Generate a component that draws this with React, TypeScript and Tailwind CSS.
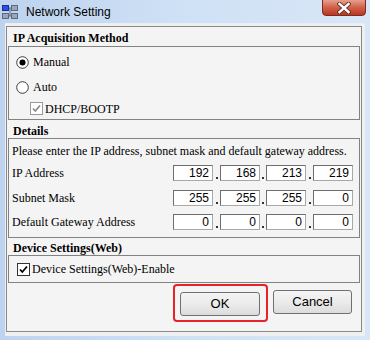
import React from "react";

const serif = { fontFamily: "'Liberation Serif', 'Times New Roman', serif" };
const sans = { fontFamily: "'Liberation Sans', Arial, sans-serif" };

function Radio({ checked }: { checked?: boolean }) {
  return (
    <svg width="13" height="13" viewBox="0 0 13 13" className="shrink-0">
      <circle cx="6.5" cy="6.5" r="5.8" fill="#ffffff" stroke="#3c3c3c" strokeWidth="1" />
      {checked && <circle cx="6.5" cy="6.5" r="3" fill="#000000" />}
    </svg>
  );
}

function Check({ disabled }: { disabled?: boolean }) {
  const c = disabled ? "#8c8c8c" : "#000000";
  const b = disabled ? "#9a9a9a" : "#333333";
  return (
    <svg width="13" height="13" viewBox="0 0 13 13" className="shrink-0">
      <rect x="0.5" y="0.5" width="12" height="12" fill="#ffffff" stroke={b} strokeWidth="1" />
      <path d="M3 6.5 L5.3 9 L10 3.5" fill="none" stroke={c} strokeWidth="1.8" />
    </svg>
  );
}

function IpBox({ v }: { v: string }) {
  return (
    <div
      className="w-[40px] h-[16px] bg-white border border-t-[#6e6e6e] border-l-[#6e6e6e] border-r-[#a8a8a8] border-b-[#a8a8a8] flex items-center justify-end pr-[3px] text-[12px] leading-none text-black"
      style={sans}
    >
      {v}
    </div>
  );
}

function Dot({ w }: { w: string }) {
  return (
    <div className={`${w} h-[16px] flex items-end justify-center pb-[2px]`}>
      <div className="w-[2px] h-[2px] bg-[#333]" />
    </div>
  );
}

function IpRow({ label, vals, h }: { label: string; vals: string[]; h: string }) {
  return (
    <div className={`${h} flex items-center`}>
      <div className="w-[164px] pl-[3px] text-[12px] text-black" style={serif}>
        {label}
      </div>
      <IpBox v={vals[0]} />
      <Dot w="w-[7px]" />
      <IpBox v={vals[1]} />
      <Dot w="w-[6px]" />
      <IpBox v={vals[2]} />
      <Dot w="w-[7px]" />
      <IpBox v={vals[3]} />
    </div>
  );
}

export default function App() {
  return (
    <div className="w-[370px] h-[340px] overflow-hidden relative bg-gradient-to-r from-[#bdd3ef] via-[#cfe1f5] to-[#d8e7f7]">
      {/* title bar */}
      <div className="h-[23px] flex items-center relative">
        <svg width="16" height="16" viewBox="0 0 16 16" className="ml-[2px] shrink-0">
          <rect x="0.5" y="1.5" width="6" height="5" fill="#2a4fe8" stroke="#1a2f9a" />
          <rect x="9.5" y="1.5" width="6" height="5" fill="#9aa6b8" stroke="#5d6a7e" />
          <rect x="0.5" y="9.5" width="6" height="5" fill="#9aa6b8" stroke="#5d6a7e" />
          <rect x="9.5" y="9.5" width="6" height="5" fill="#9aa6b8" stroke="#5d6a7e" />
          <path d="M7 4 H9 M8 4 V12 M7 12 H9" stroke="#5d6a7e" strokeWidth="1" fill="none" />
        </svg>
        <span className="ml-[8px] text-[12px] text-black" style={sans}>
          Network Setting
        </span>
        <div className="absolute left-[322px] top-[-2px] w-[44px] h-[18px] rounded-b-[4px] border border-[#7d2a1f] bg-gradient-to-b from-[#e7a897] via-[#d4634c] to-[#b9351f] flex items-center justify-center">
          <svg width="14" height="12" viewBox="0 0 14 12" className="mt-[1px]">
            <path d="M2.5 2 L11.5 10 M11.5 2 L2.5 10" stroke="#5a2a22" strokeWidth="4.2" strokeLinecap="square" />
            <path d="M2.5 2 L11.5 10 M11.5 2 L2.5 10" stroke="#ffffff" strokeWidth="2.4" strokeLinecap="square" />
          </svg>
        </div>
      </div>

      {/* client area */}
      <div className="mx-[5px] h-[313px] bg-[#f0f0f0] border-t border-[#e9eef5] pt-[2px]">
        <div className="ml-[1px] w-[356px] h-[306px] border border-[#8a8a8a] bg-[#f4f4f4] px-[1px] flex flex-col">
          {/* IP Acquisition Method */}
          <div className="h-[19px] flex items-end pb-[1px] pl-[5px] text-[12px] leading-[14px] font-bold text-black" style={serif}>
            IP Acquisition Method
          </div>
          <div className="w-[352px] h-[74px] border border-[#828282] flex flex-col pt-[2px]">
            <div className="h-[26px] flex items-center pl-[7px] gap-[4px] text-[12px] text-black" style={serif}>
              <Radio checked />
              <span>Manual</span>
            </div>
            <div className="h-[24px] flex items-center pl-[7px] gap-[4px] text-[12px] text-black" style={serif}>
              <Radio />
              <span>Auto</span>
            </div>
            <div className="h-[19px] flex items-center pl-[21px] gap-[2px] text-[12px] text-black" style={serif}>
              <Check disabled />
              <span>DHCP/BOOTP</span>
            </div>
          </div>

          {/* Details */}
          <div className="h-[18px] flex items-end pb-[0px] pl-[5px] text-[12px] leading-[13px] font-bold text-black" style={serif}>
            Details
          </div>
          <div className="w-[352px] h-[100px] border border-[#828282] flex flex-col pt-[2px]">
            <div className="h-[20px] flex items-center pl-[3px] text-[12px] text-black whitespace-nowrap" style={serif}>
              Please enter the IP address, subnet mask and default gateway address.
            </div>
            <IpRow h="h-[24px]" label="IP Address" vals={["192", "168", "213", "219"]} />
            <IpRow h="h-[25px]" label="Subnet Mask" vals={["255", "255", "255", "0"]} />
            <IpRow h="h-[24px]" label="Default Gateway Address" vals={["0", "0", "0", "0"]} />
          </div>

          {/* Device Settings */}
          <div className="h-[17px] flex items-end pb-[0px] pl-[5px] text-[12px] leading-[13px] font-bold text-black" style={serif}>
            Device Settings(Web)
          </div>
          <div className="w-[352px] h-[28px] border border-[#828282] flex items-center pl-[8px] gap-[2px] text-[12px] text-black" style={serif}>
            <Check />
            <span>Device Settings(Web)-Enable</span>
          </div>

          {/* Buttons */}
          <div className="flex justify-end pr-[8px] pt-[7px] gap-[13px]">
            <div className="relative">
              <div className="absolute left-[-7px] top-[-6px] w-[95px] h-[38px] rounded-[4px] border-2 border-[#e8222a]" />
              <button
                className="w-[80px] h-[24px] rounded-[3px] border border-[#707070] bg-gradient-to-b from-[#f4f4f4] via-[#ebebeb] to-[#dcdcdc] text-[13px] text-black"
                style={sans}
              >
                OK
              </button>
            </div>
            <button
              className="w-[79px] h-[24px] rounded-[3px] border border-[#707070] bg-gradient-to-b from-[#f4f4f4] via-[#ebebeb] to-[#dcdcdc] text-[13px] text-black"
              style={sans}
            >
              Cancel
            </button>
          </div>
        </div>
      </div>
    </div>
  );
}
